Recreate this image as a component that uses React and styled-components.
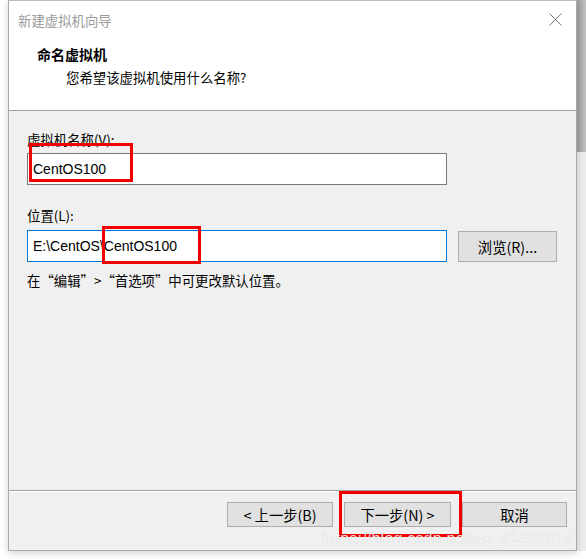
import React from "react";
import styled, { createGlobalStyle } from "styled-components";

const GlobalStyle = createGlobalStyle`
  html, body {
    margin: 0;
    padding: 0;
    background: #ffffff;
  }
  body {
    font-family: "Noto Sans CJK SC", "Liberation Sans", sans-serif;
    font-size: 13.4px;
    color: #000;
  }
`;

const Page = styled.div`
  width: 586px;
  height: 559px;
  display: flex;
  align-items: flex-start;
  overflow: hidden;
  padding-left: 8px;
  box-sizing: border-box;
`;

const Window = styled.div`
  position: relative;
  width: 569px;
  height: 551px;
  box-sizing: border-box;
  border: 1px solid #a9a9a9;
  border-top-color: #bdbdbd;
  background: #f0f0f0;
  display: flex;
  flex-direction: column;
  box-shadow: 0 2px 8px rgba(0, 0, 0, 0.18);
`;

/* the grey edge of whatever sits behind the dialog */
const BehindStrip = styled.div`
  width: 9px;
  display: flex;
  flex-direction: column;
`;

const BehindBlock = styled.div`
  height: 152px;
  background: linear-gradient(to right, #9e9e9e, #c4c4c4);
`;

const BehindLight = styled.div`
  height: 399px;
  background: #ececec;
`;

const Header = styled.div`
  background: #fff;
  height: 109px;
  border-bottom: 1px solid #a0a0a0;
  display: flex;
  flex-direction: column;
`;

const TitleBar = styled.div`
  height: 37px;
  display: flex;
  align-items: center;
  justify-content: space-between;
  padding: 0 14px 0 9px;
`;

const TitleText = styled.span`
  color: #9a9a9a;
  font-size: 13.4px;
`;

const Heading = styled.div`
  padding: 6px 0 0 28px;
  display: flex;
  flex-direction: column;
  gap: 3px;
`;

const HeadingTitle = styled.div`
  font-weight: bold;
  font-size: 14px;
  line-height: 20px;
`;

const HeadingSub = styled.div`
  padding-left: 29px;
  line-height: 20px;
`;

const Body = styled.div`
  flex: 1;
  padding: 19px 0 0 18px;
  display: flex;
  flex-direction: column;
`;

const Label = styled.label`
  display: block;
  line-height: 18px;
  margin-bottom: ${(p) => p.$gap || 4}px;
`;

const Row = styled.div`
  display: flex;
  align-items: center;
  gap: 11px;
  margin-bottom: ${(p) => p.$gap || 0}px;
`;

const FieldWrap = styled.div`
  position: relative;
  width: 420px;
  height: 32px;
`;

const Field = styled.div`
  width: 100%;
  height: 100%;
  box-sizing: border-box;
  background: #fff;
  border: 1px solid ${(p) => (p.$focused ? "#0078d7" : "#7a7a7a")};
  font-family: "Liberation Sans", "Noto Sans CJK SC", sans-serif;
  font-size: 14px;
  display: flex;
  align-items: center;
  padding-left: 5px;
`;

const Highlight = styled.div`
  position: absolute;
  box-sizing: border-box;
  border: 3px solid #f20000;
  pointer-events: none;
`;

const Button = styled.button`
  width: ${(p) => p.$w || 106}px;
  height: ${(p) => p.$h || 25}px;
  box-sizing: border-box;
  background: #e1e1e1;
  border: 1px solid #adadad;
  font-family: "Noto Sans CJK SC", "Liberation Sans", sans-serif;
  font-size: 14.3px;
  color: #000;
  padding: 0;
  display: flex;
  align-items: center;
  justify-content: center;
`;

const Hint = styled.div`
  margin-top: 8px;
  line-height: 20px;
`;

const Footer = styled.div`
  height: 48px;
  border-top: 1px solid #a0a0a0;
  box-shadow: inset 0 1px 0 #ffffff;
  display: flex;
  justify-content: flex-end;
  align-items: flex-start;
  gap: 11px;
  padding: 11px 9px 0 0;
`;

const ButtonWrap = styled.div`
  position: relative;
`;

const Watermark = styled.div`
  position: absolute;
  right: 2px;
  bottom: 2px;
  font-family: "Liberation Sans", sans-serif;
  font-size: 16px;
  color: rgba(255, 255, 255, 0.85);
  text-shadow: 0 0 1px rgba(0, 0, 0, 0.2);
  pointer-events: none;
  letter-spacing: 0.2px;
`;

const CloseIcon = () => (
  <svg width="13" height="13" viewBox="0 0 13 13">
    <path d="M0.5 0.5 L12.5 12.5 M12.5 0.5 L0.5 12.5" stroke="#777" strokeWidth="1" />
  </svg>
);

export default function App() {
  return (
    <>
      <GlobalStyle />
      <Page>
        <Window>
          <Header>
            <TitleBar>
              <TitleText>新建虚拟机向导</TitleText>
              <CloseIcon />
            </TitleBar>
            <Heading>
              <HeadingTitle>命名虚拟机</HeadingTitle>
              <HeadingSub>您希望该虚拟机使用什么名称?</HeadingSub>
            </Heading>
          </Header>

          <Body>
            <Label $gap={5}>虚拟机名称(V):</Label>
            <Row $gap={21}>
              <FieldWrap>
                <Field>CentOS100</Field>
                <Highlight style={{ left: 2, top: -10, width: 104, height: 39 }} />
              </FieldWrap>
            </Row>
            <Label $gap={6}>位置(L):</Label>
            <Row>
              <FieldWrap>
                <Field $focused>E:\CentOS\CentOS100</Field>
                <Highlight style={{ left: 75, top: -4, width: 99, height: 38 }} />
              </FieldWrap>
              <Button $w={99} $h={31}>浏览(R)...</Button>
            </Row>
            <Hint>在“编辑”&gt;“首选项”中可更改默认位置。</Hint>
          </Body>

          <Footer>
            <Button $w={106}>&lt; 上一步(B)</Button>
            <ButtonWrap>
              <Button $w={107}>下一步(N) &gt;</Button>
              <Highlight style={{ left: -5, top: -11, width: 123, height: 46 }} />
            </ButtonWrap>
            <Button $w={105}>取消</Button>
          </Footer>

          <Watermark>https://blog.csdn.net/qq_41432014</Watermark>
        </Window>
        <BehindStrip>
          <BehindBlock />
          <BehindLight />
        </BehindStrip>
      </Page>
    </>
  );
}
